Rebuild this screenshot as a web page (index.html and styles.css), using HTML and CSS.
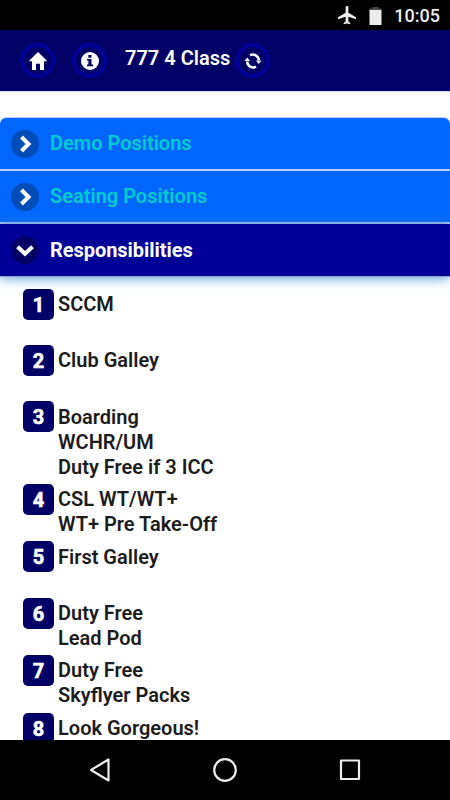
FILE: index.html
```html
<!DOCTYPE html>
<html lang="en">
<head>
<meta charset="utf-8">
<title>777 4 Class</title>
<link rel="stylesheet" href="styles.css">
</head>
<body>
<div class="status">
  <svg class="plane" width="18" height="19" viewBox="0 0 18 19"><path d="M9 0c-.9 0-1.400.7-1.400 1.500v5.200L0 11.300v1.900l7.600-2.400v4.600l-2 1.500v1.400L9 17.400l3.400.9v-1.400l-2-1.500v-4.600l7.600 2.400v-1.900l-7.600-4.600V1.500C10.400.7 9.900 0 9 0z"/></svg>
  <svg class="battery" width="13" height="18" viewBox="0 0 13 18"><path class="dim" d="M3.500 0h6v1.500H12q1 0 1 1.500H0q0-1.500 1-1.500h2.500z"/><path d="M.5 3h12v15H.5z"/></svg>
  <span class="time">10:05</span>
</div>
<header class="header">
  <span class="button"><svg width="18" height="18" viewBox="0 0 18 18"><path d="M9 0l8.700 8.500v.8H15V18h-4v-6.300H7V18H3V9.300H.3v-.8z"/></svg></span>
  <span class="button info"><svg width="18" height="18" viewBox="0 0 18 18"><circle cx="9" cy="9" r="9"/><path class="cut" d="M7.300 3h3.200v2.700H7.300zM6 7h4.500v5.600h1.600v1.600H6v-1.600h1.400v-4H6z"/></svg></span>
  <h1 class="title">777 4 Class</h1>
  <span class="button"><svg width="18" height="18" viewBox="0 0 18 18"><path class="arc" d="M6 3.200A6 6 0 0 1 14.800 8.200M12 14.700A6 6 0 0 1 3.200 9.500"/><path d="M12 8.500h5.500l-2.800 3.500zM.5 9l2.700-3.500L6 9z"/></svg></span>
</header>
<main class="content">
  <section class="accordion">
    <div class="item"><span class="disc"><svg width="28" height="28" viewBox="0 0 28 28"><path d="M10.500 7l7 7-7 7"/></svg></span>Demo Positions</div>
    <div class="item"><span class="disc"><svg width="28" height="28" viewBox="0 0 28 28"><path d="M10.500 7l7 7-7 7"/></svg></span>Seating Positions</div>
    <div class="item open"><span class="disc"><svg width="28" height="28" viewBox="0 0 28 28"><path d="M6.500 10.800l7.500 7 7.500-7"/></svg></span>Responsibilities</div>
  </section>
  <ul class="list">
    <li class="row"><span class="badge">1</span><span>SCCM</span></li>
    <li class="row"><span class="badge">2</span><span>Club Galley</span></li>
    <li class="row"><span class="badge">3</span><span>Boarding<br>WCHR/UM<br>Duty Free if 3 ICC</span></li>
    <li class="row"><span class="badge">4</span><span>CSL WT/WT+<br>WT+ Pre Take-Off</span></li>
    <li class="row"><span class="badge">5</span><span>First Galley</span></li>
    <li class="row"><span class="badge">6</span><span>Duty Free<br>Lead Pod</span></li>
    <li class="row"><span class="badge">7</span><span>Duty Free<br>Skyflyer Packs</span></li>
    <li class="row"><span class="badge">8</span><span>Look Gorgeous!</span></li>
  </ul>
</main>
<nav class="nav">
  <svg width="22" height="26" viewBox="0 0 22 26"><path d="M2 13l17.500-10.500v21z"/></svg>
  <svg width="26" height="26" viewBox="0 0 26 26"><circle cx="13" cy="13" r="10.800"/></svg>
  <svg width="22" height="26" viewBox="0 0 22 26"><path d="M2 3.500h18v18.500H2z"/></svg>
</nav>
</body>
</html>
```
FILE: styles.css
```css
* { box-sizing: border-box; }
body {
  margin: 0;
  width: 450px;
  height: 800px;
  display: flex;
  flex-direction: column;
  overflow: hidden;
  background: #fff;
  font: 600 20px/25px Roboto, sans-serif;
  color: #1c1c1c;
}
svg { display: block; }
.status {
  flex: none;
  height: 30px;
  background: #000;
  display: flex;
  align-items: center;
  justify-content: flex-end;
  padding: 1px 10px 0 0;
  color: #ececec;
  font-size: 18px;
  font-weight: 500;
}
.status svg { fill: #ececec; }
.status .dim { fill: #4a4a4a; }
.plane { margin-right: 13px; }
.battery { margin-right: 12px; }
.header {
  flex: none;
  height: 61px;
  background: #000066;
  display: flex;
  align-items: center;
  padding-left: 20px;
}
.button {
  width: 35px;
  height: 35px;
  border: 4px solid #000099;
  border-radius: 50%;
  display: flex;
  align-items: center;
  justify-content: center;
}
.button svg { fill: #fff; }
.info { margin-left: 17px; }
.info .cut { fill: #000066; }
.button .arc { fill: none; stroke: #fff; stroke-width: 2.600; }
.title {
  margin: -4px 5px 0 18px;
  font-size: 20px;
  font-weight: 600;
  color: #fff;
  white-space: nowrap;
}
.content {
  flex: 1;
  min-height: 0;
  overflow: hidden;
  border-top: 1px solid #d8d8e8;
  padding-top: 25px;
}
.accordion {
  border-top: 1px solid #b4ceff;
  border-radius: 6px 6px 0 0;
}
.item {
  height: 53px;
  display: flex;
  align-items: center;
  padding: 0 0 0 11px;
  background: #0066ff;
  border-bottom: 2px solid #c0cdfa;
  color: #00cccc;
  font-weight: 600;
}
.item:first-child { border-radius: 6px 6px 0 0; }
.disc {
  width: 28px;
  height: 28px;
  margin-right: 11px;
  border-radius: 50%;
  background: #004db8;
}
.disc path { fill: none; stroke: #fff; stroke-width: 4; }
.open {
  height: 53px;
  background: #000099;
  color: #fff;
  border-bottom: 1px solid #8fa4c8;
  box-shadow: 0 0 12px #3388cc;
  font-weight: 700;
  letter-spacing: -.05px;
}
.open .disc { background: #000066; }
.list {
  list-style: none;
  margin: 0;
  padding: 12px 0 0 23px;
}
.row {
  display: flex;
  gap: 4px;
  min-height: 56.200px;
  padding-bottom: 4.300px;
}
.row > span:last-child { padding-top: 3.200px; }
.badge {
  width: 31px;
  height: 31px;
  border-radius: 5px;
  background: #000066;
  color: #fff;
  font-weight: 700;
  line-height: 33px;
  text-align: center;
  -webkit-text-stroke: .6px #fff;
}
.nav {
  flex: none;
  height: 60px;
  background: #000;
  display: flex;
  align-items: center;
  justify-content: space-between;
  padding: 0 89px;
}
.nav svg { fill: none; stroke: #ececec; stroke-width: 2.200; stroke-linejoin: round; }
```
